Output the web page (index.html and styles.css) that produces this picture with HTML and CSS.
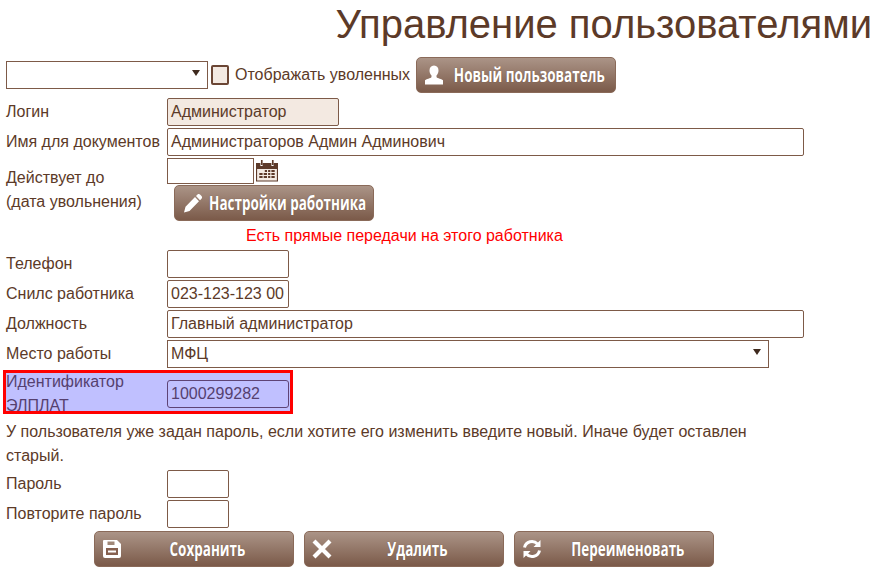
FILE: index.html
```html
<!DOCTYPE html>
<html lang="ru">
<head>
<meta charset="utf-8">
<title>Управление пользователями</title>
<link rel="stylesheet" href="styles.css">
</head>
<body>
<h1 class="title">Управление пользователями</h1>
<div class="toolbar">
  <div class="field select w-top"><span class="arrow"></span></div>
  <span class="check"></span>
  <span class="check-label">Отображать уволенных</span>
  <a class="btn btn-new">
    <svg class="ico" viewBox="0 0 20 20"><path fill="#fff" d="M10 0.500c3 0 4.500 2.200 4.500 5 0 2-.8 3.800-2 5v1.500c0 1 3.500 1.500 6.500 3.200v4.300H1v-4.300c3-1.700 6.500-2.200 6.500-3.200v-1.500c-1.200-1.200-2-3-2-5 0-2.800 1.500-5 4.500-5z"/></svg>
    <span class="btn-text"><span class="squeeze">Новый пользователь</span></span>
  </a>
</div>
<div class="row r-login"><label class="lbl">Логин</label><div class="field w-login readonly">Администратор</div></div>
<div class="row r-name"><label class="lbl">Имя для документов</label><div class="field w-full">Администраторов Админ Админович</div></div>
<div class="date-block">
  <div class="date-labels"><div>Действует до</div><div>(дата увольнения)</div></div>
  <div class="date-right">
    <div class="date-line">
      <div class="field w-date"></div>
      <svg class="cal" viewBox="1 0 20 22" preserveAspectRatio="none">
        <path fill="#5d3a2a" d="M1 3h4v3h2V3h8v3h2V3h4v6H1z"/>
        <rect x="5.500" y="0" width="1.500" height="5" fill="#5d3a2a"/><rect x="15.500" y="0" width="1.500" height="5" fill="#5d3a2a"/>
        <path fill="#f4ebe4" stroke="#5d3a2a" d="M1.500 8.500h19v12.500h-19z"/>
        <path fill="#5d3a2a" d="M9 10h2v2H9zM12 10h2v2h-2zM15 10h3v2h-3zM4 13h3v2H4zM8 13h3v2H8zM12 13h2v2h-2zM15 13h3v2h-3zM4 16h3v2H4zM8 16h3v2H8zM12 16h2v2h-2zM15 16h3v2h-3z"/>
      </svg>
    </div>
    <a class="btn btn-settings">
      <svg class="ico ico-pen" viewBox="0 0 20 20"><path fill="#fff" d="M14.500 1.500c1-.8 2-.6 2.800.2l1.200 1.300c.8.800.8 1.800 0 2.700L17 7.200 13 3zM12 4l4 4.200L6.500 18 1 19.500l1.500-5.800z"/></svg>
      <span class="btn-text"><span class="squeeze">Настройки работника</span></span>
    </a>
  </div>
</div>
<div class="warning">Есть прямые передачи на этого работника</div>
<div class="row"><label class="lbl">Телефон</label><div class="field w-mid"></div></div>
<div class="row"><label class="lbl">Снилс работника</label><div class="field w-mid">023-123-123 00</div></div>
<div class="row"><label class="lbl">Должность</label><div class="field w-full">Главный администратор</div></div>
<div class="row"><label class="lbl">Место работы</label><div class="field select w-work">МФЦ<span class="arrow"></span></div></div>
<div class="highlight">
  <label class="lbl lbl-wrap">Идентификатор ЭЛПЛАТ</label>
  <div class="field w-mid tinted">1000299282</div>
</div>
<p class="note">У пользователя уже задан пароль, если хотите его изменить введите новый. Иначе будет оставлен старый.</p>
<div class="row r-pass"><label class="lbl">Пароль</label><div class="field w-pass"></div></div>
<div class="row"><label class="lbl">Повторите пароль</label><div class="field w-pass"></div></div>
<div class="actions">
  <a class="btn btn-action">
    <svg class="ico" viewBox="0 0 20 20"><path fill="#fff" d="M2 1h13l4 4v12a2 2 0 0 1-2 2H3a2 2 0 0 1-2-2V2a1 1 0 0 1 1-1z"/><path fill="#a08878" d="M5.500 2.500h7V6h-7z"/><path fill="#86604f" d="M4 9h12v7H4z"/><path fill="#fff" d="M6 11.500h8v2H6z"/></svg>
    <span class="btn-text"><span class="squeeze">Сохранить</span></span>
  </a>
  <a class="btn btn-action">
    <svg class="ico" viewBox="0 0 20 20"><path fill="none" stroke="#fff" stroke-width="4.200" d="M2 2l16 16M18 2L2 18"/></svg>
    <span class="btn-text"><span class="squeeze">Удалить</span></span>
  </a>
  <a class="btn btn-action">
    <svg class="ico" viewBox="0 0 20 20"><path fill="none" stroke="#fff" stroke-width="3" d="M2.500 8.500A7.500 7.500 0 0 1 15.500 5M17.500 11.500A7.500 7.500 0 0 1 4.500 15"/><path fill="#fff" d="M18.500 1v7h-7zM1.500 19v-7h7z"/></svg>
    <span class="btn-text"><span class="squeeze">Переименовать</span></span>
  </a>
</div>
</body>
</html>
```
FILE: styles.css
```css
html, body { margin: 0; padding: 0; background: #fff; }
body {
  font-family: "Liberation Sans", Arial, sans-serif;
  font-size: 16px;
  line-height: 24px;
  color: #5c3a28;
  height: 573px;
  overflow: hidden;
  padding-left: 6px;
  box-sizing: border-box;
}
.title {
  margin: 0;
  height: 57px;
  padding-right: 10px;
  font-size: 40px;
  font-weight: 400;
  line-height: 48px;
  text-align: right;
}
.toolbar { display: flex; align-items: center; height: 36px; }
.field {
  box-sizing: border-box;
  height: 28px;
  padding: 0 3px;
  border: 1px solid #7d5a48;
  border-radius: 2px;
  background: #fff;
  line-height: 26px;
  white-space: nowrap;
  position: relative;
}
.select { border-radius: 0; }
.arrow {
  position: absolute;
  right: 7px;
  top: 8px;
  width: 0;
  height: 0;
  border-left: 4px solid transparent;
  border-right: 4px solid transparent;
  border-top: 6px solid #3f2a1e;
}
.w-top { width: 202px; }
.check {
  box-sizing: border-box;
  width: 18px;
  height: 20px;
  margin-left: 3px;
  border: 2px solid #6b4634;
  border-radius: 2px;
  background: #f3e9e1;
}
.check-label { margin-left: 6px; }
.btn {
  box-sizing: border-box;
  display: flex;
  align-items: center;
  width: 200px;
  height: 36px;
  padding-left: 7px;
  border: 1px solid #8a6a59;
  border-radius: 5px;
  background: linear-gradient(#ab9487, #7b5a49);
  color: #fff;
  text-shadow: 0 0 1px #6b4a38;
}
.btn-new { margin-left: 6px; }
.ico { width: 20px; height: 20px; flex: none; }
.btn-text {
  flex: 1;
  min-width: 0;
  display: flex;
  justify-content: center;
  font-family: "Open Sans", sans-serif;
  font-size: 19px;
  font-weight: 700;
}
.squeeze { display: inline-block; transform: scaleX(0.71); white-space: nowrap; }
.row { display: flex; align-items: center; height: 28px; margin-top: 2px; }
.lbl { width: 161px; flex: none; white-space: nowrap; }
.r-login { margin-top: 5px; }
.readonly { background: #f3e9e1; }
.w-login { width: 172px; }
.w-full { width: 637px; }
.r-name { height: 27px; }
.date-block { display: flex; margin-top: 3px; }
.date-labels { width: 161px; padding-top: 8px; }
.date-line { display: flex; height: 27px; }
.w-date { width: 87px; height: 26px; border-radius: 0; }
.cal { width: 22px; height: 22px; margin: 2px 0 0 2px; }
.btn-settings { margin-left: 7px; }
.ico-pen { margin-left: 1px; margin-right: -1px; }
.warning { color: #f00; height: 24px; margin: 3px 0 0 240px; }
.w-mid { width: 122px; }
.w-work { width: 602px; }
.highlight {
  box-sizing: border-box;
  display: flex;
  align-items: center;
  width: 290px;
  height: 44px;
  margin: 2px 0 0 -3px;
  border: 3px solid #f00;
  background: #c0c0ff;
  color: #55406f;
  overflow: hidden;
}
.lbl-wrap { white-space: normal; height: 48px; align-self: flex-start; position: relative; top: -3px; }
.tinted { background: transparent; margin-top: 4px; border-radius: 3px; border-color: #5e4476; }
.note { margin: 6px 0 0; width: 790px; }
.r-pass { margin-top: 2px; }
.w-pass { width: 62px; }
.actions { display: flex; gap: 10px; margin: 3px 0 0 88px; }
```
